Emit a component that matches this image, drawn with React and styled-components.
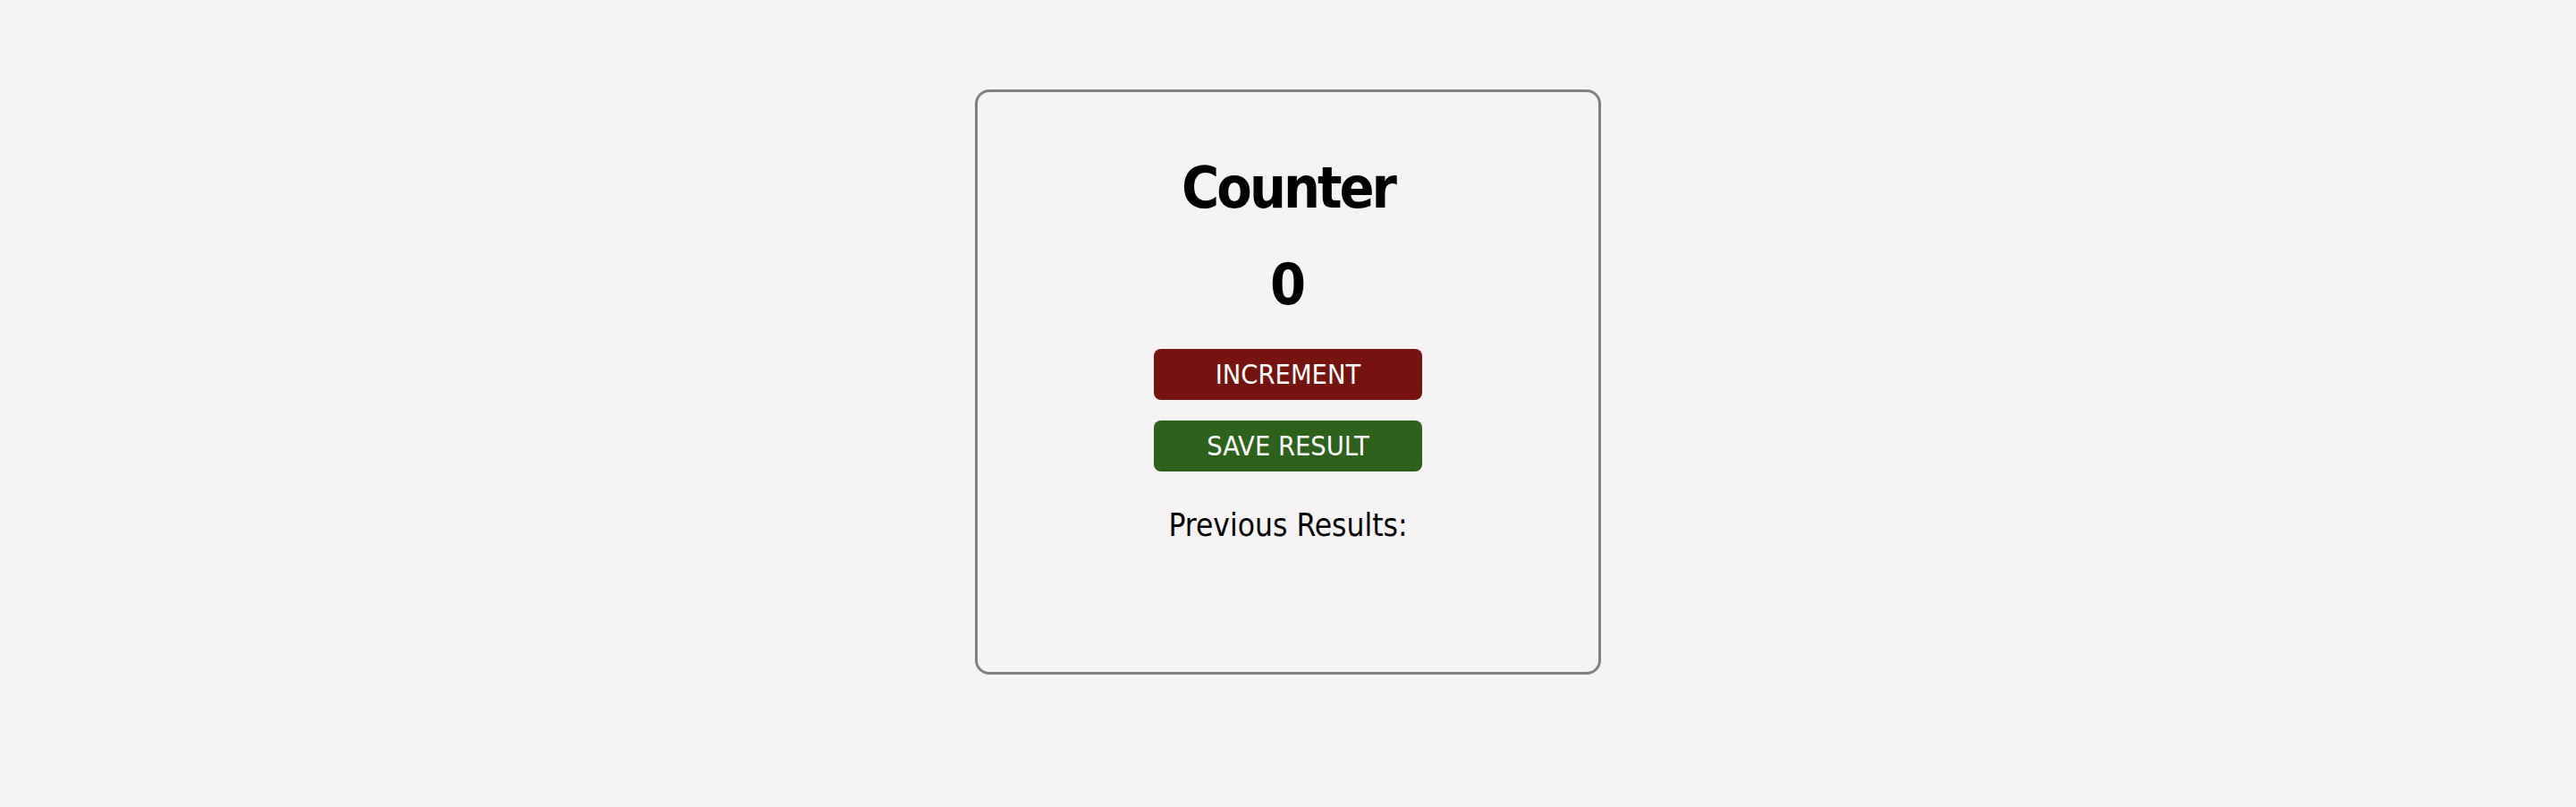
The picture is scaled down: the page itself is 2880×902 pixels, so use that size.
import React, { useState } from 'react'
import styled, { createGlobalStyle } from 'styled-components'

const GlobalStyle = createGlobalStyle`
  body {
    margin: 0;
    background-color: #f5f3f4;
    font-family: "DejaVu Sans Condensed", "DejaVu Sans", sans-serif;
    color: #000;
  }
`

const Page = styled.div`
  display: flex;
  justify-content: center;
  padding-top: 100px;
`

const Card = styled.div`
  box-sizing: border-box;
  width: 700px;
  height: 654px;
  border: 3px solid #808080;
  border-radius: 16px;
  padding-top: 75px;
  display: flex;
  flex-direction: column;
  align-items: center;
`

const Title = styled.h1`
  margin: 0 0 44px;
  font-size: 64px;
  line-height: 64px;
  font-weight: bold;
  letter-spacing: -3px;
`

const Count = styled.div`
  margin: 0 0 40px;
  font-size: 64px;
  line-height: 64px;
  font-weight: bold;
`

const Actions = styled.div`
  display: flex;
  flex-direction: column;
  gap: 23px;
  margin-bottom: 43px;
`

const Button = styled.button`
  width: 300px;
  height: 57px;
  border: none;
  border-radius: 8px;
  background-color: ${(p) => p.$bg};
  color: #fff;
  font-family: inherit;
  font-size: 30.5px;
  line-height: 30px;
  padding: 0;
  cursor: pointer;
`

const Results = styled.p`
  margin: 0;
  font-size: 35px;
  line-height: 35px;
`

const List = styled.ul`
  margin: 0;
  padding: 0;
  list-style: none;
  font-size: 28px;
`

export default function App() {
  const [count, setCount] = useState(0)
  const [results, setResults] = useState([])

  return (
    <>
      <GlobalStyle />
      <Page>
        <Card>
          <Title>Counter</Title>
          <Count>{count}</Count>
          <Actions>
            <Button $bg="#76130e" onClick={() => setCount(count + 1)}>INCREMENT</Button>
            <Button $bg="#2c621a" onClick={() => setResults([...results, count])}>SAVE RESULT</Button>
          </Actions>
          <Results>Previous Results:</Results>
          <List>
            {results.map((r, i) => (
              <li key={i}>{r}</li>
            ))}
          </List>
        </Card>
      </Page>
    </>
  )
}
